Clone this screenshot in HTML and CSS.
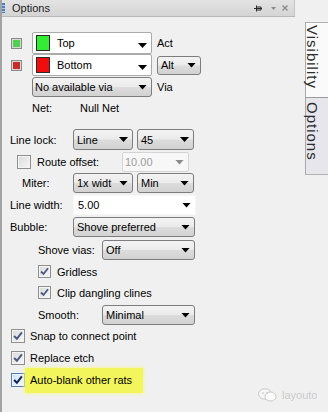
FILE: index.html
```html
<!DOCTYPE html>
<html>
<head>
<meta charset="utf-8">
<link rel="stylesheet" href="styles.css">
</head>
<body>
<div class="window">
  <div class="panel">
    <div class="titlebar">
      <span class="grip"></span>
      <span class="title">Options</span>
      <span class="tb-icons">
        <svg class="pin" width="8" height="7" viewBox="0 0 8 7"><path d="M0 3.5H8M2.5 0.5V6.5M2.5 2H7V5H2.5" fill="none" stroke="#2a2a2a" stroke-width="1"/></svg>
        <svg class="menu" width="5" height="3" viewBox="0 0 5 3"><path d="M0 0H5L2.5 3Z" fill="#8a8a8a"/></svg>
        <svg class="close" width="6" height="6" viewBox="0 0 6 6"><path d="M0.5 0.5L5.5 5.5M5.5 0.5L0.5 5.5" stroke="#8a8a8a" stroke-width="1.3"/></svg>
      </span>
    </div>
    <div class="content">
      <div class="row h22">
        <span class="swchk green"></span>
        <div class="combo white w120 ml10"><span class="sw green"></span><span>Top</span><span class="arrow low"></span></div>
        <span class="side">Act</span>
      </div>
      <div class="row h22">
        <span class="swchk red"></span>
        <div class="combo white w120 ml10"><span class="sw red"></span><span>Bottom</span><span class="arrow low"></span></div>
        <div class="combo w44 h19 ml5"><span>Alt</span><span class="arrow"></span></div>
      </div>
      <div class="row mt1">
        <div class="combo w120 ml30 pl2"><span>No available via</span><span class="arrow"></span></div>
        <span class="side">Via</span>
      </div>
      <div class="row mt1">
        <span class="net-label">Net:</span><span>Null Net</span>
      </div>
      <div class="row h21 mt11">
        <span class="lbl ind8 w63">Line lock:</span>
        <div class="combo w60"><span>Line</span><span class="arrow"></span></div>
        <div class="combo w57 ml4"><span>45</span><span class="arrow"></span></div>
      </div>
      <div class="row mt2">
        <span class="cb big ml15"></span>
        <span class="lbl ml6 w85">Route offset:</span>
        <div class="tbox disabled w67"><span>10.00</span><span class="arrow gray"></span></div>
      </div>
      <div class="row mt1">
        <span class="lbl ind20 w51">Miter:</span>
        <div class="combo w60"><span>1x widt</span><span class="arrow"></span></div>
        <div class="combo w57 ml4"><span>Min</span><span class="arrow"></span></div>
      </div>
      <div class="row mt2">
        <span class="lbl ind8 w63">Line width:</span>
        <div class="tbox w123"><span>5.00</span><span class="arrow"></span></div>
      </div>
      <div class="row mt2">
        <span class="lbl ind8 w63">Bubble:</span>
        <div class="combo w122"><span>Shove preferred</span><span class="arrow"></span></div>
      </div>
      <div class="row mt3">
        <span class="lbl ind36 w64">Shove vias:</span>
        <div class="combo w93"><span>Off</span><span class="arrow"></span></div>
      </div>
      <div class="row h21 mt1">
        <span class="cb ml36"><svg width="9" height="9" viewBox="0 0 9 9"><path d="M1 4.5L3.5 7L8 1.2" fill="none" stroke="#4a5a82" stroke-width="1.8"/></svg></span>
        <span class="lbl ml6">Gridless</span>
      </div>
      <div class="row h21">
        <span class="cb ml36"><svg width="9" height="9" viewBox="0 0 9 9"><path d="M1 4.5L3.5 7L8 1.2" fill="none" stroke="#4a5a82" stroke-width="1.8"/></svg></span>
        <span class="lbl ml6">Clip dangling clines</span>
      </div>
      <div class="row mt2">
        <span class="lbl ind36 w64">Smooth:</span>
        <div class="combo w93"><span>Minimal</span><span class="arrow"></span></div>
      </div>
      <div class="row mt1">
        <span class="cb big ml9"><svg width="10" height="10" viewBox="0 0 9 9"><path d="M1 4.5L3.5 7L8 1.2" fill="none" stroke="#4a5a82" stroke-width="1.8"/></svg></span>
        <span class="lbl ml5">Snap to connect point</span>
      </div>
      <div class="row mt2">
        <span class="cb big ml9"><svg width="10" height="10" viewBox="0 0 9 9"><path d="M1 4.5L3.5 7L8 1.2" fill="none" stroke="#4a5a82" stroke-width="1.8"/></svg></span>
        <span class="lbl ml5">Replace etch</span>
      </div>
      <div class="row mt2">
        <span class="cb big ml9 hot"><svg width="10" height="10" viewBox="0 0 9 9"><path d="M1 4.5L3.5 7L8 1.2" fill="none" stroke="#0f2456" stroke-width="1.9"/></svg></span>
        <span class="hl">Auto-blank other rats</span>
      </div>
    </div>
  </div>
  <div class="tabs">
    <div class="tab vis">Visibility</div>
    <div class="tab opt">Options</div>
  </div>
</div>
<div class="watermark">
  <svg width="19" height="14" viewBox="0 0 19 14"><ellipse cx="7" cy="6" rx="6.5" ry="5.2" fill="#f6f6f6" stroke="#c9c9c9" stroke-width="1"/><ellipse cx="12.5" cy="8.5" rx="5.6" ry="4.5" fill="#fbfbfb" stroke="#c9c9c9" stroke-width="1"/><circle cx="5" cy="5" r="0.8" fill="#c0c0c0"/><circle cx="9" cy="5" r="0.8" fill="#c0c0c0"/></svg>
  <span>layouto</span>
</div>
</body>
</html>
```
FILE: styles.css
```css
body {
  margin: 0;
  width: 328px;
  height: 412px;
  overflow: hidden;
  position: relative;
  background: #f0f0f0;
  font-family: "Liberation Sans", Arial, sans-serif;
  font-size: 11px;
  color: #000;
}

.window {
  display: flex;
  height: 412px;
}

.panel {
  width: 295px;
  box-sizing: border-box;
  border-left: 2px solid #a3a3a3;
  display: flex;
  flex-direction: column;
}

.titlebar {
  height: 17px;
  box-sizing: border-box;
  display: flex;
  align-items: center;
  background: linear-gradient(#e3e3e3, #d4d4d4);
  border-bottom: 1px solid #b9b9b9;
  border-right: 1px solid #c6c6c6;
}

.grip {
  width: 3px;
  height: 10px;
  background: repeating-linear-gradient(#4f7dc2 0 2px, #b8c9e6 2px 3px);
}

.title {
  margin-left: 7px;
  color: #1c1c1c;
}

.tb-icons {
  margin-left: auto;
  margin-right: 6px;
  display: flex;
  align-items: center;
}

.pin { margin-right: 9px; }
.menu { margin-right: 6px; }

.content {
  padding-top: 15px;
  display: flex;
  flex-direction: column;
}

.row {
  display: flex;
  align-items: center;
  height: 20px;
  flex-shrink: 0;
}

.h22 { height: 22px; }
.h21 { height: 21px; }
.mt1 { margin-top: 1px; }
.mt2 { margin-top: 2px; }
.mt3 { margin-top: 3px; }
.mt11 { margin-top: 11px; }

.ml4 { margin-left: 4px; }
.ml5 { margin-left: 5px; }
.ml6 { margin-left: 6px; }
.ml9 { margin-left: 9px; }
.ml10 { margin-left: 10px; }
.ml15 { margin-left: 15px; }
.ml30 { margin-left: 30px; }
.ml36 { margin-left: 36px; }
.ind8 { margin-left: 8px; }
.ind20 { margin-left: 20px; }
.ind36 { margin-left: 36px; }

.w44 { width: 44px; }
.w51 { width: 51px; }
.w57 { width: 57px; }
.w60 { width: 60px; }
.w63 { width: 63px; }
.w64 { width: 64px; }
.w67 { width: 67px; }
.w85 { width: 85px; }
.w93 { width: 93px; }
.w120 { width: 120px; }
.w122 { width: 122px; }
.w123 { width: 123px; }

.lbl { flex-shrink: 0; white-space: nowrap; }

.side { margin-left: 5px; }

.net-label {
  margin-left: 30px;
  width: 48px;
}

/* colour swatch check boxes */
.swchk {
  margin-left: 9px;
  width: 11px;
  height: 11px;
  box-sizing: border-box;
  border: 1px solid #8a8a8a;
  box-shadow: inset 0 0 0 1px #d8d8d8;
}
.swchk.green { background: #4fd04f; }
.swchk.red { background: #c92a2a; }

/* combo boxes */
.combo {
  box-sizing: border-box;
  height: 100%;
  display: flex;
  align-items: center;
  flex-shrink: 0;
  padding-left: 3px;
  border: 1px solid #7d7d7d;
  border-radius: 3px;
  background: linear-gradient(#f3f3f3 0%, #ebebeb 48%, #dcdcdc 52%, #d2d2d2 100%);
  white-space: nowrap;
}
.combo.h19 { height: 19px; }
.combo.pl2 { padding-left: 2px; }

.combo.white {
  background: #fff;
  border-color: #ababab;
  border-radius: 2px;
}

.sw {
  width: 14px;
  height: 16px;
  box-sizing: border-box;
  border: 1px solid #2a2a2a;
  margin-right: 7px;
}
.sw.green { background: #35ec35; }
.sw.red { background: #f00d0d; }

.arrow {
  margin-left: auto;
  margin-right: 4px;
  width: 9px;
  height: 5px;
  background: #000;
  clip-path: polygon(0 0, 100% 0, 50% 100%);
  flex-shrink: 0;
}
.arrow.low { margin-top: 5px; }
.arrow.gray { background: #8c8c8c; }

/* text boxes */
.tbox {
  box-sizing: border-box;
  height: 100%;
  display: flex;
  align-items: center;
  padding-left: 4px;
  background: #fff;
  border: 1px solid #f7f7f7;
}
.tbox.disabled {
  padding-left: 2px;
  background: #f7f7f7;
  border: 1px solid #d4d4d4;
  border-radius: 2px;
  color: #9c9c9c;
}

/* check boxes */
.cb {
  width: 13px;
  height: 13px;
  box-sizing: border-box;
  flex-shrink: 0;
  border: 1px solid #8e8f8f;
  background: linear-gradient(135deg, #d9d9d9, #f8f8f8);
  box-shadow: inset 0 0 0 1px #f4f4f4;
  display: flex;
  align-items: center;
  justify-content: center;
}
.cb.big {
  width: 14px;
  height: 14px;
}
.cb.hot {
  border-color: #4e7fb8;
  background: linear-gradient(135deg, #cfe2f4, #f4f9fe);
}

.hl {
  height: 25px;
  display: flex;
  align-items: center;
  padding: 0 11px 0 5px;
  background: #f3f55c;
  box-shadow: 0 0 3px 1px #f4f6a4;
  white-space: nowrap;
}

/* side tabs */
.tabs {
  width: 33px;
  box-sizing: border-box;
  padding-top: 22px;
  padding-left: 10px;
  display: flex;
  flex-direction: column;
}

.tab {
  writing-mode: vertical-rl;
  box-sizing: border-box;
  width: 23px;
  padding-right: 10px;
  font-size: 15px;
  line-height: 12px;
  letter-spacing: 1px;
  color: #2b2b2b;
  border-left: 1px solid #a8a8a8;
  white-space: nowrap;
}

.tab.vis {
  height: 76px;
  padding-top: 2px;
  background: #fafafa;
  border-top: 1px solid #b0b0b0;
  border-bottom: 1px solid #9a9a9a;
}

.tab.opt {
  height: 77px;
  padding-top: 4px;
  background: #e6e6ec;
  border-bottom: 1px solid #b4b4b4;
}

/* watermark overlay */
.watermark {
  position: absolute;
  left: 258px;
  top: 387px;
  height: 16px;
  display: flex;
  align-items: center;
  gap: 5px;
  color: #c6c6c6;
  font-size: 11px;
  text-shadow: 0 0 1px #ffffff;
}
```
